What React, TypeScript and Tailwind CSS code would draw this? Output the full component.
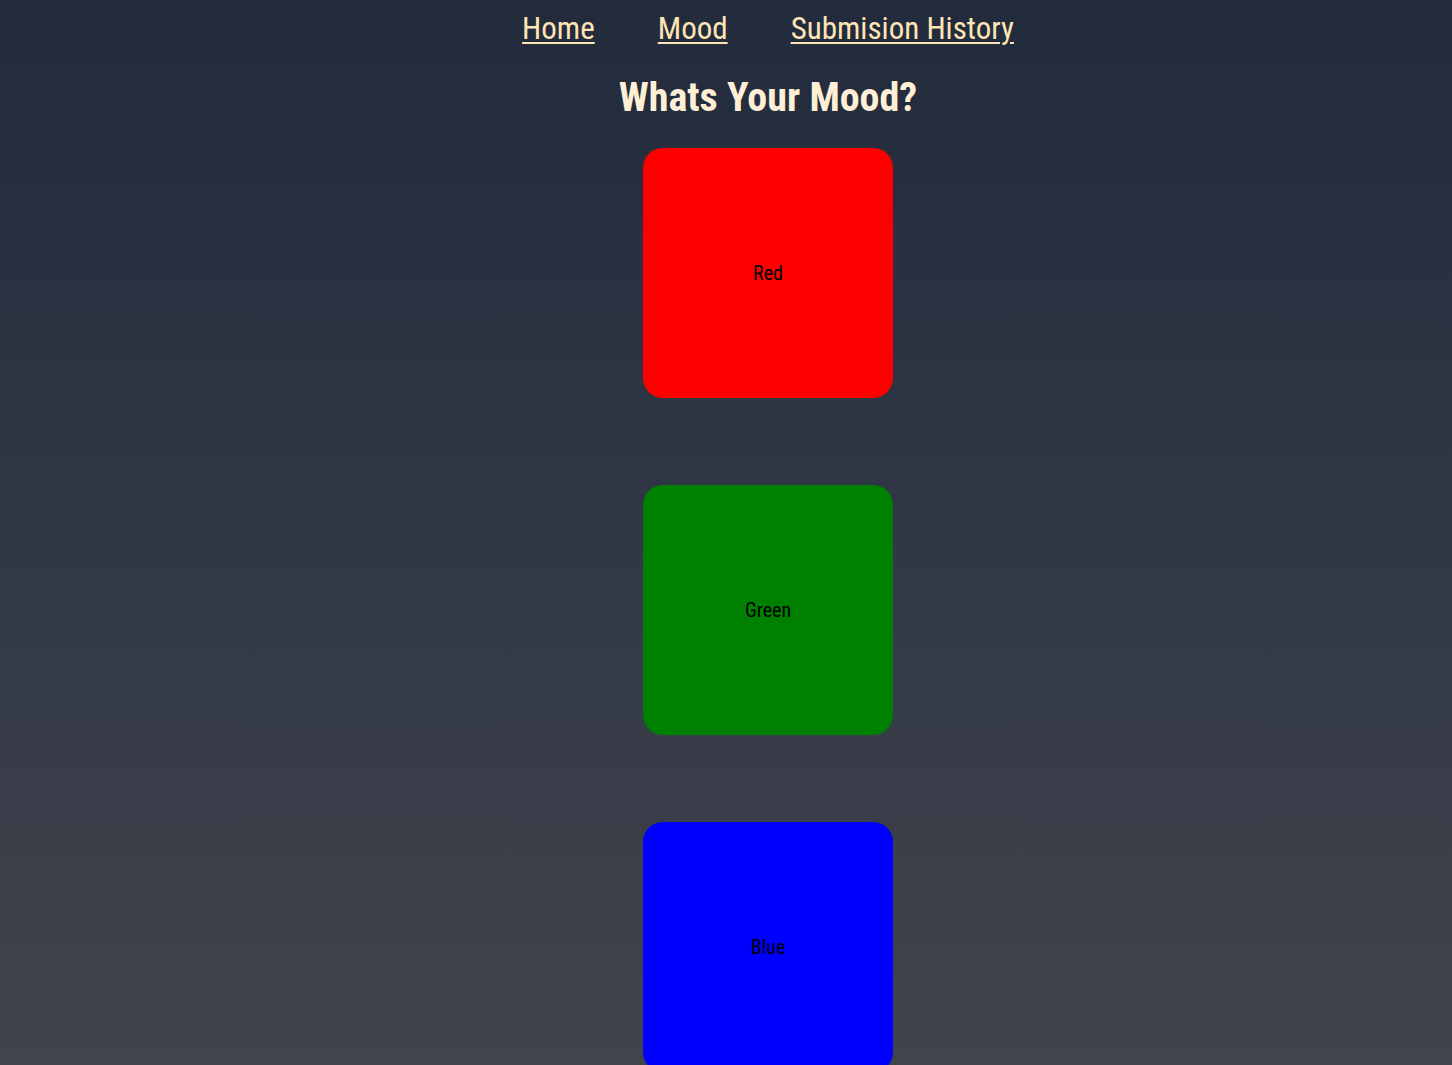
export default function App() {
  const moods = [
    { name: "Red", bg: "bg-[#ff0000]" },
    { name: "Green", bg: "bg-[#008000]" },
    { name: "Blue", bg: "bg-[#0000ff]" },
  ];
  return (
    <div
      className="min-h-[1065px] h-[1065px] overflow-hidden w-full bg-gradient-to-b from-[#222b3c] to-[#40444d] pl-[84px] flex flex-col items-center"
      style={{ fontFamily: '"Roboto Condensed", Roboto, sans-serif', fontStretch: "condensed" }}
    >
      <nav className="flex items-center gap-[63px] pt-[10px] h-[50px]">
        <a href="#" className="text-[31px] leading-[38px] text-[#ffe4b5] underline decoration-2 underline-offset-[3px]">Home</a>
        <a href="#" className="text-[31px] leading-[38px] text-[#ffe4b5] underline decoration-2 underline-offset-[3px]">Mood</a>
        <a href="#" className="text-[31px] leading-[38px] text-[#ffe4b5] underline decoration-2 underline-offset-[3px]">Submision History</a>
      </nav>
      <h1 className="mt-[26px] text-[40px] leading-[48px] font-bold text-[#ffefd5]">Whats Your Mood?</h1>
      <div className="mt-[26px] flex flex-col gap-[87px]">
        {moods.map((m) => (
          <button
            key={m.name}
            className={`w-[250px] h-[250px] shrink-0 rounded-[20px] ${m.bg} flex items-center justify-center text-[20px] text-black`}
          >
            {m.name}
          </button>
        ))}
      </div>
    </div>
  );
}
